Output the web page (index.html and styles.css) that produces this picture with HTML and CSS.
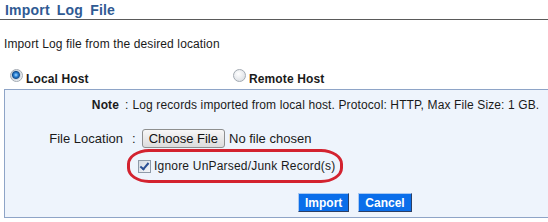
FILE: index.html
```html
<!DOCTYPE html>
<html lang="en">
<head>
    <meta charset="utf-8">
    <title>Import Log File</title>
    <link rel="stylesheet" href="styles.css">
</head>
<body>
    <h2 class="page-title">Import Log File</h2>
    <p class="intro">Import Log file from the desired location</p>

    <div class="host-choice">
        <label class="host-option"><input type="radio" name="host" checked> Local Host</label>
        <label class="host-option"><input type="radio" name="host"> Remote Host</label>
    </div>

    <div class="import-panel">
        <div class="form-row note-row">
            <span class="row-label bold">Note</span>
            <span class="row-sep">:</span>
            <span class="row-value">Log records imported from local host. Protocol: HTTP, Max File Size: 1 GB.</span>
        </div>
        <div class="form-row file-row">
            <span class="row-label">File Location</span>
            <span class="row-sep">:</span>
            <span class="row-value"><input type="file" class="file-input"></span>
        </div>
        <div class="check-row">
            <label class="junk-check"><input type="checkbox" checked> Ignore UnParsed/Junk Record(s)</label>
        </div>
        <div class="actions">
            <button class="btn">Import</button>
            <button class="btn">Cancel</button>
        </div>
    </div>
</body>
</html>
```

FILE: styles.css
```css
body {
    margin: 0;
    font-family: "Liberation Sans", Arial, sans-serif;
    font-size: 12px;
    letter-spacing: 0.12px;
    color: #1a1a1a;
    background: #fff;
}

.page-title {
    margin: 0;
    padding: 2px 5px 1px;
    font-size: 14px;
    font-weight: bold;
    letter-spacing: 0.2px;
    word-spacing: 3px;
    color: #2f5a93;
    border-bottom: 1px solid #5a5a5a;
}

.intro {
    margin: 17px 0 0 4px;
}

.host-choice {
    display: grid;
    grid-template-columns: 223px 1fr;
    padding: 19px 0 0 10px;
    height: 19px;
}

.host-option {
    display: flex;
    align-items: center;
    gap: 3px;
    font-weight: bold;
    font-size: 12px;
    height: 18px;
}

.host-option input {
    -webkit-appearance: none;
    appearance: none;
    width: 13px;
    height: 13px;
    margin: -7px 0 0;
    border-radius: 50%;
    border: 1px solid #a3aab2;
    background: radial-gradient(circle at 40% 35%, #ffffff, #d3d8de);
}

.host-option input:checked {
    background: radial-gradient(circle at 45% 45%, #a8dcff 0, #2b83d8 2px, #15508f 3.5px, #cfd6de 4.5px, #eef1f4 6px);
}

.import-panel {
    margin-left: 4px;
    border: 1px solid #8ea4c7;
    border-right: none;
    background: #eef4fc;
    height: 129px;
    box-sizing: border-box;
    padding-top: 8px;
}

.form-row {
    display: grid;
    align-items: center;
}

.note-row {
    grid-template-columns: 114px auto 1fr;
}

.note-row .row-sep {
    padding: 0 4px 0 6px;
}

.file-row {
    grid-template-columns: 118px auto 1fr;
    margin-top: 17px;
    font-size: 13px;
    letter-spacing: 0;
}

.file-row .row-sep {
    padding: 0 6px 0 9px;
}

.row-label {
    text-align: right;
}

.bold {
    font-weight: bold;
}

.file-input {
    font-family: "Liberation Sans", Arial, sans-serif;
    font-size: 13px;
    color: #1a1a1a;
}

.file-input::file-selector-button {
    font-family: "Liberation Sans", Arial, sans-serif;
    font-size: 13px;
    height: 19px;
    padding: 0 6px;
    margin-right: 4px;
    border: 1px solid #8e8f8f;
    border-radius: 3px;
    background: linear-gradient(#f7f7f7, #dcdcdc);
    color: #111;
}

.check-row {
    margin-top: 1px;
    padding-left: 122px;
    letter-spacing: 0.2px;
}

.junk-check {
    display: inline-flex;
    align-items: center;
    gap: 3px;
    padding: 7px 5px 7px 8px;
    border: 3px solid #d3222f;
    border-radius: 22px / 15px;
}

.junk-check input {
    -webkit-appearance: none;
    appearance: none;
    width: 13px;
    height: 13px;
    margin: 0;
    border: 1px solid #8e9aa8;
    background: linear-gradient(135deg, #d4dae3, #f4f6f9);
    position: relative;
}

.junk-check input:checked::after {
    content: '';
    position: absolute;
    left: 3px;
    top: 0;
    width: 3px;
    height: 7px;
    border: solid #2a4f94;
    border-width: 0 2px 2px 0;
    transform: rotate(40deg);
}

.actions {
    display: flex;
    gap: 9px;
    padding: 10px 0 0 293px;
}

.btn {
    font-family: "Liberation Sans", Arial, sans-serif;
    font-size: 12px;
    font-weight: bold;
    color: #fff;
    background: #0a6eea;
    height: 19px;
    padding: 0 6px;
    border: 1px solid;
    border-color: #a9c9f2 #2d3f64 #2d3f64 #a9c9f2;
    cursor: pointer;
}
```
